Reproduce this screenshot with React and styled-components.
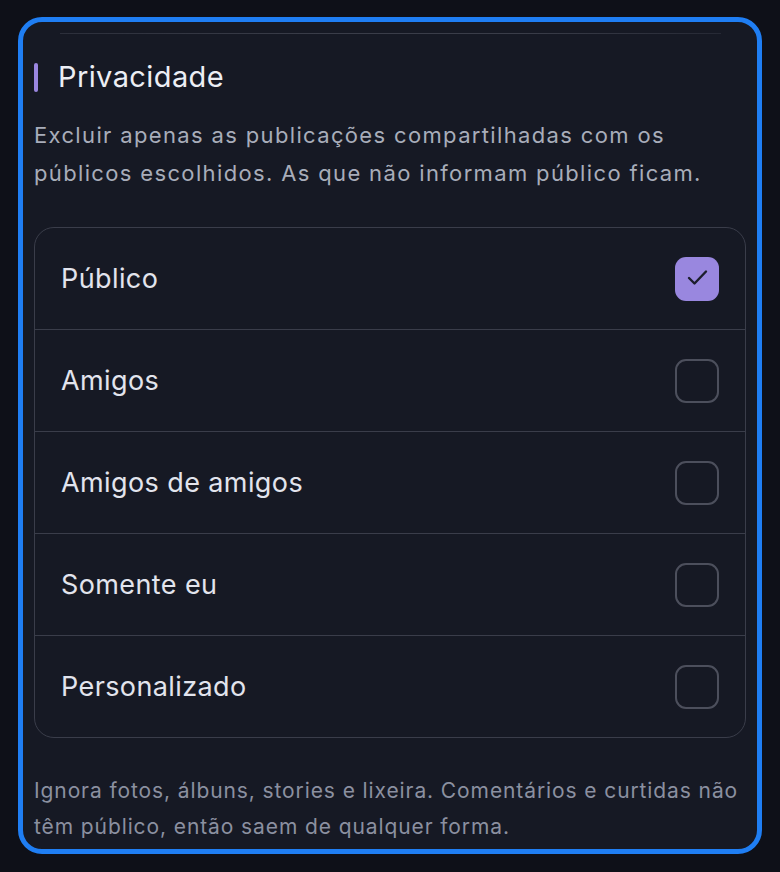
import React, { useState } from 'react'
import styled, { createGlobalStyle } from 'styled-components'

const GlobalStyle = createGlobalStyle`
  html, body {
    margin: 0;
    padding: 0;
    background: #0e1018;
  }
  body {
    font-family: Inter, "Noto Sans", "Liberation Sans", sans-serif;
    -webkit-font-smoothing: antialiased;
  }
`

const Page = styled.div`
  padding: 17px 18px 18px;
  height: 872px;
  box-sizing: border-box;
`

const Panel = styled.section`
  height: 100%;
  box-sizing: border-box;
  border: 5px solid #1f7ef3;
  border-radius: 24px;
  background: #161924;
  padding: 0 11px;
  overflow: hidden;
`

const TopRule = styled.div`
  height: 1px;
  margin: 11px 25px 0 26px;
  background: linear-gradient(90deg, #2c2f3b 0%, #3a3d49 40%, #3a3d49 70%, #262935 100%);
`

const Header = styled.div`
  display: flex;
  align-items: center;
  gap: 20px;
  margin-top: 25px;
  height: 36px;
`

const Accent = styled.span`
  width: 4px;
  height: 29px;
  border-radius: 2px;
  background: #9a86e0;
`

const Title = styled.h2`
  margin: 0;
  font-size: 29px;
  font-weight: 400;
  letter-spacing: 0.4px;
  line-height: 36px;
  color: #eceef4;
`

const Desc = styled.p`
  margin: 21px 0 0;
  font-size: 22px;
  letter-spacing: 1.35px;
  line-height: 38px;
  color: #a8adba;
`

const List = styled.div`
  margin-top: 35px;
  border: 1px solid #3a3d4a;
  border-radius: 20px;
  overflow: hidden;
`

const Row = styled.label`
  display: flex;
  align-items: center;
  justify-content: space-between;
  height: 101px;
  padding: 0 26px;
  cursor: pointer;
  & + & {
    border-top: 1px solid #3a3d4a;
  }
`

const Label = styled.span`
  font-size: 27px;
  letter-spacing: 0.4px;
  color: #e2e4ed;
`

const Box = styled.span`
  width: 44px;
  height: 44px;
  box-sizing: border-box;
  border-radius: 11px;
  display: flex;
  align-items: center;
  justify-content: center;
  border: ${p => (p.checked ? 'none' : '2px solid #4c4f5c')};
  background: ${p => (p.checked ? '#9987df' : 'transparent')};
`

const Note = styled.p`
  margin: 35px 0 0;
  font-size: 21px;
  letter-spacing: 0.9px;
  line-height: 36px;
  color: #8b90a0;
`

const options = ['Público', 'Amigos', 'Amigos de amigos', 'Somente eu', 'Personalizado']

const Check = () => (
  <svg width="44" height="44" viewBox="0 0 44 44" fill="none" stroke="#1c1e2c" strokeWidth="2.4" strokeLinecap="round" strokeLinejoin="round">
    <polyline points="14 21 19.5 26.5 31 14.5" />
  </svg>
)

export default function App() {
  const [selected, setSelected] = useState(['Público'])
  const toggle = o =>
    setSelected(s => (s.includes(o) ? s.filter(x => x !== o) : [...s, o]))

  return (
    <Page>
      <GlobalStyle />
      <Panel>
        <TopRule />
        <Header>
          <Accent />
          <Title>Privacidade</Title>
        </Header>
        <Desc>
          Excluir apenas as publicações compartilhadas com os públicos escolhidos. As que não informam público ficam.
        </Desc>
        <List>
          {options.map(o => (
            <Row key={o} onClick={() => toggle(o)}>
              <Label>{o}</Label>
              <Box checked={selected.includes(o)}>{selected.includes(o) && <Check />}</Box>
            </Row>
          ))}
        </List>
        <Note>
          Ignora fotos, álbuns, stories e lixeira. Comentários e curtidas não têm público, então saem de qualquer forma.
        </Note>
      </Panel>
    </Page>
  )
}
